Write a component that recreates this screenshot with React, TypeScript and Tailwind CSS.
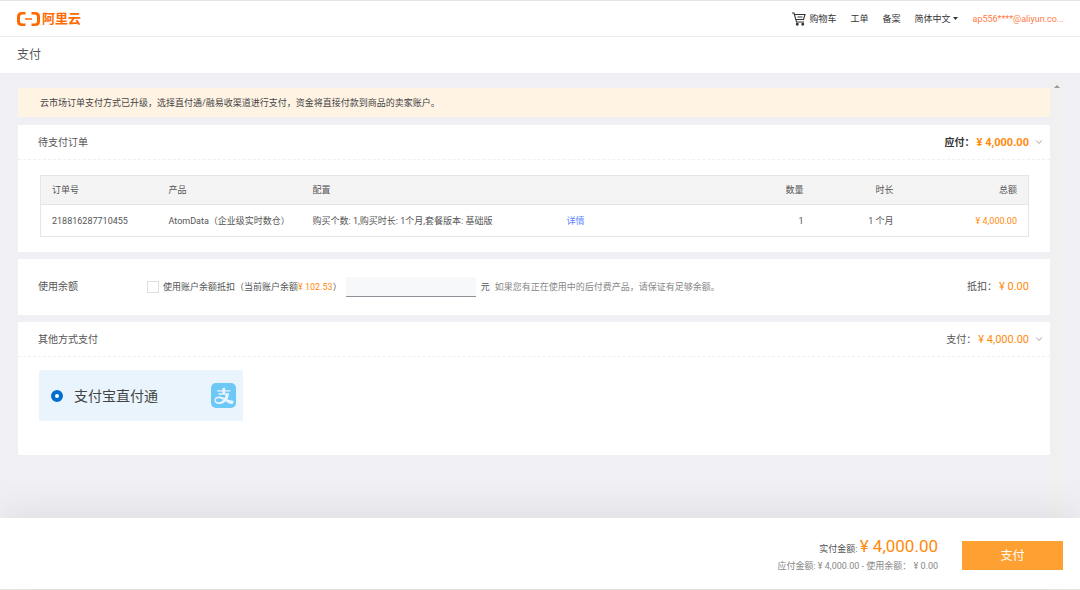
import { useState, type ReactNode } from 'react';
import { AiFillAlipaySquare } from 'react-icons/ai';

const orders = [
  {
    id: '218816287710455',
    product: 'AtomData（企业级实时数仓）',
    config: '购买个数: 1,购买时长: 1个月,套餐版本: 基础版',
    quantity: 1,
    duration: '1 个月',
    total: '¥ 4,000.00',
  },
];

function AliyunLogo() {
  return (
    <svg className="h-[14px] w-[23px]" viewBox="0 0 46 28" fill="none" aria-hidden="true">
      <path
        d="M17 0v5h-6q-5 0-5 5v8q0 5 5 5h6v5h-7q-10 0-10-9V9q0-9 10-9zM29 0v5h6q5 0 5 5v8q0 5-5 5h-6v5h7q10 0 10-9V9q0-9-10-9z"
        fill="#ff6a00"
      />
      <path d="M16 14h14" stroke="#ff6a00" strokeWidth="3" />
    </svg>
  );
}

function CartIcon() {
  return (
    <svg className="h-[14px] w-[14px]" viewBox="0 0 28 28" fill="none" stroke="#333" strokeWidth="2.200" aria-hidden="true">
      <path d="M0 2h4l5 18h15M5 5h21l-3 10H8M11 10h10" />
      <circle cx="10.500" cy="24.500" r="1.800" fill="#333" />
      <circle cx="21.500" cy="24.500" r="1.800" fill="#333" />
    </svg>
  );
}

function Chevron({ open }: { open: boolean }) {
  return (
    <svg className={`h-2 w-2 ${open ? '' : '-rotate-90'}`} viewBox="0 0 16 16" fill="none" stroke="#999" strokeWidth="1.800" aria-hidden="true">
      <path d="M2.500 3 8 9l5.500-6" />
    </svg>
  );
}

interface PanelProps {
  title: string;
  label: string;
  amount: string;
  strong?: boolean;
  children: ReactNode;
}

function Panel({ title, label, amount, strong, children }: PanelProps) {
  const [open, setOpen] = useState(true);

  return (
    <section className="bg-white">
      <div className="flex h-[35px] items-center justify-between border-b border-dashed border-[#f0f0f0] pt-[2px] pr-[7px] pl-5">
        <h2 className="text-[10px] text-[#555]">{title}</h2>
        <div className={`flex items-center text-[10px] ${strong ? 'font-bold text-[#333]' : 'text-[#555]'}`}>
          <span>{label}：</span>
          <span className="ml-[2px] text-[11px] text-[#ff8a0d]">{amount}</span>
          <button type="button" className="ml-[6px]" aria-label={title} aria-expanded={open} onClick={() => setOpen(!open)}>
            <Chevron open={open} />
          </button>
        </div>
      </div>
      {open && children}
    </section>
  );
}

export default function App() {
  const [useBalance, setUseBalance] = useState(false);
  const [balance, setBalance] = useState('');

  return (
    <div className="flex min-h-screen flex-col border-t border-b border-t-[#e6e6e6] border-b-[#e8eadc] bg-[#efeff4] font-['Roboto','Noto_Sans_CJK_SC',sans-serif] text-[9px] leading-[14px] text-[#555]">
      <header className="flex h-9 items-center justify-between border-b border-[#ebebeb] bg-white pr-4 pl-[17px]">
        <a href="#" className="flex items-center gap-[2px] text-[13px] font-bold text-[#ff6a00]">
          <AliyunLogo />
          阿里云
        </a>
        <nav className="flex items-center gap-[14px] text-[#333]">
          <a href="#" className="flex items-center gap-[3px]">
            <CartIcon />
            购物车
          </a>
          <a href="#">工单</a>
          <a href="#">备案</a>
          <button type="button" className="flex items-center gap-[3px]">
            简体中文
            <svg className="h-[3px] w-[5px]" viewBox="0 0 10 6" fill="#333" aria-hidden="true">
              <path d="M0 0h10L5 6z" />
            </svg>
          </button>
          <a href="#" className="text-[#ff7a45]">ap556****@aliyun.co...</a>
        </nav>
      </header>

      <div className="flex h-9 items-center bg-white px-[17px]">
        <h1 className="text-xs">支付</h1>
      </div>

      <div className="flex flex-1 pr-4 pl-[18px]">
        <main className="min-w-0 flex-1 pt-[15px] pb-12">
          <p className="mb-2 bg-[#fff3e4] px-[22px] pt-2 pb-[7px] text-[#444]">
            云市场订单支付方式已升级，选择直付通/融易收渠道进行支付，资金将直接付款到商品的卖家账户。
          </p>

          <div className="flex flex-col gap-[7px]">
            <Panel title="待支付订单" label="应付" amount="¥ 4,000.00" strong>
              <div className="py-[15px] pr-[21px] pl-[22px]">
                <table className="w-full table-fixed border-collapse border border-[#e6e6e6] text-left">
                  <thead className="bg-[#f4f4f4]">
                    <tr className="h-[29px] border-b border-[#e6e6e6] *:px-[11px] *:font-normal">
                      <th className="w-[117px]">订单号</th>
                      <th className="w-[144px]">产品</th>
                      <th className="w-[254px]">配置</th>
                      <th className="w-[100px]" />
                      <th className="text-right">数量</th>
                      <th className="w-[90px] text-right">时长</th>
                      <th className="w-[124px] text-right">总额</th>
                    </tr>
                  </thead>
                  <tbody>
                    {orders.map((order) => (
                      <tr key={order.id} className="h-8 *:px-[11px]">
                        <td>{order.id}</td>
                        <td className="whitespace-nowrap">{order.product}</td>
                        <td>{order.config}</td>
                        <td>
                          <a href="#" className="text-[#5c85ff]">详情</a>
                        </td>
                        <td className="text-right">{order.quantity}</td>
                        <td className="text-right">{order.duration}</td>
                        <td className="text-right text-[#ff8a0d]">{order.total}</td>
                      </tr>
                    ))}
                  </tbody>
                </table>
              </div>
            </Panel>

            <section className="flex h-14 items-center bg-white pr-[21px] pl-5">
              <h2 className="w-[109px] text-[10px]">使用余额</h2>
              <label className="flex items-center gap-1">
                <input
                  type="checkbox"
                  checked={useBalance}
                  onChange={(e) => setUseBalance(e.target.checked)}
                  className="h-3 w-3 appearance-none border border-[#ddd] bg-white checked:bg-[#0070cc]"
                />
                <span>
                  使用账户余额抵扣（当前账户余额<span className="text-[#ff8a0d]">¥ 102.53</span>）
                </span>
              </label>
              <input
                type="text"
                aria-label="使用余额"
                value={balance}
                onChange={(e) => setBalance(e.target.value)}
                className="ml-1 h-5 w-[130px] border-b border-[#8c9097] bg-[#f7f8fa] px-2 outline-none"
              />
              <span className="ml-[5px]">元</span>
              <span className="ml-[5px] text-[#888]">如果您有正在使用中的后付费产品，请保证有足够余额。</span>
              <div className="ml-auto flex items-center text-[10px]">
                抵扣：
                <span className="ml-[2px] text-[11px] text-[#ff8a0d]">¥ 0.00</span>
              </div>
            </section>

            <Panel title="其他方式支付" label="支付" amount="¥ 4,000.00">
              <div className="px-[21px] pt-[13px] pb-[34px]">
                <label className="flex h-[51px] w-[204px] items-center rounded-xs bg-[#eaf4fc] pr-[7px] pl-3 text-sm text-[#444]">
                  <input
                    type="radio"
                    name="channel"
                    defaultChecked
                    className="mr-[11px] h-3 w-3 appearance-none rounded-full border-[4px] border-[#0070cc] bg-white"
                  />
                  支付宝直付通
                  <span className="ml-auto flex h-[25px] w-[25px] items-center justify-center overflow-hidden rounded-[5px]">
                    <AiFillAlipaySquare className="h-[34px] w-[34px] shrink-0 text-[#6cc9f6]" />
                  </span>
                </label>
              </div>
            </Panel>
          </div>
        </main>

        <div className="mt-2 w-[14px] bg-[#f0f0f1] pt-1">
          <svg className="mx-auto h-[3px] w-[6px]" viewBox="0 0 12 6" fill="#999" aria-hidden="true">
            <path d="M6 0l6 6H0z" />
          </svg>
        </div>
      </div>

      <footer className="relative flex items-end justify-end gap-6 bg-white pt-[18px] pr-[17px] pb-4 shadow-[0_-6px_36px_rgba(0,0,0,0.08)]">
        <div className="text-right">
          <p className="leading-5">
            实付金额: <span className="text-[17px] text-[#ff8a0d]">¥ 4,000.00</span>
          </p>
          <p className="text-[#888]">应付金额: ¥ 4,000.00 - 使用余额： ¥ 0.00</p>
        </div>
        <button type="button" className="mb-[3px] h-[29px] w-[101px] bg-[#ffa033] text-xs text-white">
          支付
        </button>
      </footer>
    </div>
  );
}
